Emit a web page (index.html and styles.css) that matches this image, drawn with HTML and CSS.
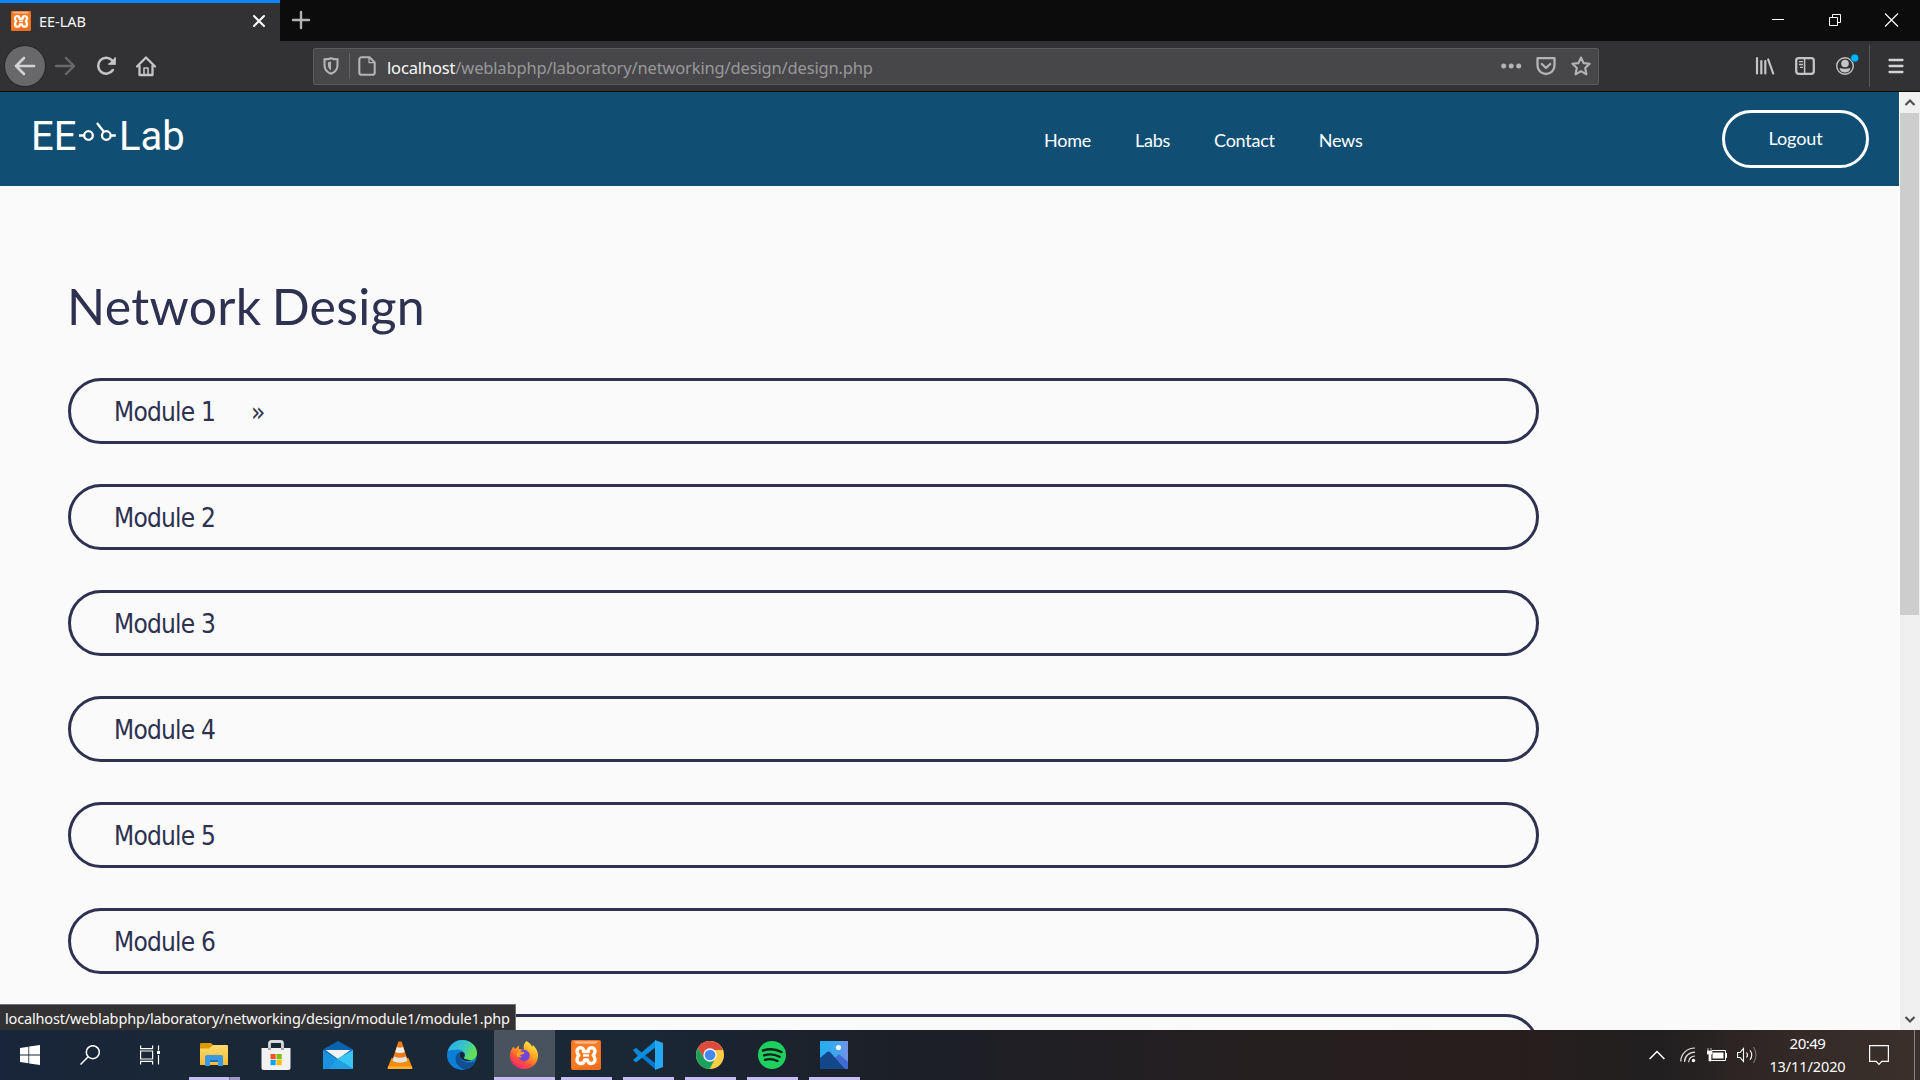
FILE: index.html
```html
<!DOCTYPE html>
<html lang="en">
<head>
<meta charset="utf-8">
<title>EE-LAB</title>
<link rel="stylesheet" href="styles.css">
</head>
<body>
<div class="screen">
  <div class="tabstrip">
    <div class="tab">
      <svg class="favicon" width="20" height="20" viewBox="0 0 30 30"><use href="#xampp"/></svg>
      <span class="tab-title">EE-LAB</span>
      <svg width="14" height="14" viewBox="0 0 14 14" fill="none" stroke="#fff" stroke-width="2" stroke-linecap="round"><path d="M2 2l10 10M12 2L2 12"/></svg>
    </div>
    <svg class="newtab" width="20" height="20" viewBox="0 0 20 20" fill="none" stroke="#b4b4b5" stroke-width="2.4" stroke-linecap="round"><path d="M10 2v16M2 10h16"/></svg>
    <div class="window-controls">
      <svg width="57" height="40" viewBox="0 0 57 40" stroke="#fff"><path d="M23 19.500h12"/></svg>
      <svg width="57" height="40" viewBox="0 0 57 40" fill="none" stroke="#fff"><path d="M23.500 17.500h8v8h-8zM26.500 17.500v-3h8v8h-3"/></svg>
      <svg width="57" height="40" viewBox="0 0 57 40" fill="none" stroke="#fff" stroke-width="1.100"><path d="M22 13.500l13 13M35 13.500l-13 13"/></svg>
    </div>
  </div>

  <div class="toolbar">
    <div class="nav-buttons">
      <span class="back"><svg width="22" height="20" viewBox="0 0 22 20" fill="none" stroke="#d2d2d3" stroke-width="2.600" stroke-linecap="round" stroke-linejoin="round"><path d="M20 10H2M10 2L2 10l8 8"/></svg></span>
      <span><svg width="22" height="20" viewBox="0 0 22 20" fill="none" stroke="#68686a" stroke-width="2.400" stroke-linecap="round" stroke-linejoin="round"><path d="M2 10h18M12 2l8 8-8 8"/></svg></span>
      <span><svg width="22" height="22" viewBox="0 0 22 22" fill="none" stroke="#c4c4c5" stroke-width="2.500" stroke-linecap="round"><path d="M17.300 5.500A8 8 0 1 0 17.900 15"/><path d="M20.500 2v7.500H13z" fill="#c4c4c5" stroke="none"/><path d="M20 3v6h-6" stroke-width="1.500"/></svg></span>
      <span><svg width="22" height="22" viewBox="0 0 22 22" fill="none" stroke="#c4c4c5" stroke-width="2.300" stroke-linecap="round" stroke-linejoin="round"><path d="M2 11.500L11 2.500l9 9M4.500 11v9h13v-9"/><path d="M9 20v-7h4v7" stroke-width="1.600"/></svg></span>
    </div>
    <div class="urlbar">
      <svg class="shield" width="16" height="18" viewBox="0 0 16 18"><path d="M8 1.200c2 .9 4 1.100 6.500 1.100V8c0 4-2.500 7.200-6.500 8.700C4 15.200 1.500 12 1.500 8V2.300C4 2.300 6 2.100 8 1.200z" fill="none" stroke="#b4b4b5" stroke-width="2.100"/><path d="M8 4.600v9C6 12 4.900 10 4.900 8V5.300z" fill="#b4b4b5"/></svg>
      <span class="url-rule"></span>
      <svg width="18" height="20" viewBox="0 0 18 20" fill="none" stroke="#b4b4b5" stroke-width="2.100" stroke-linejoin="round"><path d="M11.500 1.200H3.600a2.300 2.300 0 0 0-2.300 2.300v13a2.300 2.300 0 0 0 2.300 2.300h10.800a2.300 2.300 0 0 0 2.300-2.300V6.400z"/><path d="M11 1.500v5.200h5.500" stroke-width="1.300"/></svg>
      <span class="url"><b>localhost</b>/weblabphp/laboratory/networking/design/design.php</span>
      <svg width="22" height="20" viewBox="0 0 22 20" fill="#b4b4b5"><circle cx="2.700" cy="10" r="2.500"/><circle cx="10.200" cy="10" r="2.500"/><circle cx="17.700" cy="10" r="2.500"/></svg>
      <svg class="pocket" width="20" height="20" viewBox="0 0 20 20" fill="none" stroke="#b4b4b5" stroke-width="2.300" stroke-linecap="round" stroke-linejoin="round"><path d="M1.500 2.200h17v7.300a8.500 8.500 0 0 1-17 0z"/><path d="M5.800 8l4.200 4 4.200-4"/></svg>
      <svg width="20" height="20" viewBox="0 0 20 20" fill="none" stroke="#b4b4b5" stroke-width="2.100" stroke-linejoin="round"><path d="M10 1.500l2.600 5.600 6 .7-4.400 4.200 1.200 6.300L10 15.200l-5.400 3.100L5.800 12 1.400 7.800l6-.7z"/></svg>
    </div>
    <div class="tools">
      <svg width="20" height="20" viewBox="0 0 20 20" fill="none" stroke="#c4c4c5" stroke-width="2.200" stroke-linecap="round"><path d="M2 2v15.500M6.300 5v12.500M10.300 5v12.500M13.200 3.500l5 14"/></svg>
      <svg width="20" height="20" viewBox="0 0 20 20" fill="none" stroke="#c4c4c5"><rect x="1.200" y="2.200" width="17.600" height="15.600" rx="2.500" stroke-width="2.300"/><path d="M9.600 2v16" stroke-width="1.500"/><path d="M4 5.600h4M4 8.500h4M5 11.400h3" stroke-width="1.300"/></svg>
      <svg width="26" height="26" viewBox="0 0 26 26"><circle cx="12" cy="14" r="8.300" fill="none" stroke="#c4c4c5" stroke-width="1.400"/><circle cx="12" cy="11.500" r="3.800" fill="#c4c4c5"/><path d="M6.500 16c2.500 1 8.500 1 11 0-.5 3-2.500 4.500-5.500 4.500S7 19 6.500 16z" fill="#c4c4c5"/><circle cx="21.700" cy="6" r="4.300" fill="#075d86"/><circle cx="21.700" cy="6" r="3.500" fill="#00b3f4"/></svg>
      <span class="tools-rule"></span>
      <svg width="18" height="18" viewBox="0 0 18 18" stroke="#d2d2d3" stroke-width="2.300" stroke-linecap="round"><path d="M2.500 3h13M2.500 9h13M2.500 15h13"/></svg>
    </div>
  </div>

  <div class="viewport">
    <div class="page">
      <header class="site-header">
        <div class="logo"><span>EE</span><svg width="38" height="22" viewBox="0 0 38 22" fill="none" stroke="#fff" stroke-width="2.300"><circle cx="10.500" cy="13.500" r="4.300"/><circle cx="28.300" cy="13.500" r="4.300"/><path d="M1 13.500h5M32.800 13.500h5M19 1l7 9"/></svg><span>Lab</span></div>
        <nav class="menu"><a>Home</a><a>Labs</a><a>Contact</a><a>News</a></nav>
        <a class="logout">Logout</a>
      </header>
      <main class="content">
        <h1>Network Design</h1>
        <div class="modules">
          <a class="module">Module 1<span class="raquo">»</span></a>
          <a class="module">Module 2</a>
          <a class="module">Module 3</a>
          <a class="module">Module 4</a>
          <a class="module">Module 5</a>
          <a class="module">Module 6</a>
          <a class="module"></a>
        </div>
      </main>
    </div>
    <div class="scrollbar">
      <svg width="20" height="21" viewBox="0 0 20 21" fill="none" stroke="#505050" stroke-width="2.200"><path d="M5.500 13L10 8.500l4.500 4.500"/></svg>
      <span class="thumb"></span>
      <svg width="20" height="21" viewBox="0 0 20 21" fill="none" stroke="#505050" stroke-width="2.200"><path d="M5.500 8l4.500 4.500L14.500 8"/></svg>
    </div>
    <div class="status">localhost/weblabphp/laboratory/networking/design/module1/module1.php</div>
  </div>

  <div class="taskbar">
    <div class="system">
      <svg width="20" height="20" viewBox="0 0 20 20" fill="#fff"><path d="M0 3l8.400-1.200v7.700H0zM9.200 1.600L20 0v9.500H9.200zM0 10.500h8.400v7.700L0 17zM9.200 10.500H20V20L9.200 18.400z"/></svg>
      <svg width="20" height="20" viewBox="0 0 20 20" fill="none" stroke="#fff" stroke-width="1.500"><circle cx="12.800" cy="7.200" r="6.500"/><path d="M8.200 11.800L.5 19.500"/></svg>
      <svg width="20" height="20" viewBox="0 0 20 20" fill="none" stroke="#fff" stroke-width="1.200"><path d="M.6.500v3.200h12V.5M.6 19.500v-3.200h12v3.200M.6 6h12v8H.6zM18.500.5v5M18.500 10v9.500"/><path d="M17 6h3v3h-3z" fill="#fff" stroke="none"/></svg>
    </div>
    <div class="apps">
      <span class="app open stacked"><svg width="30" height="30" viewBox="0 0 30 30"><defs><linearGradient id="fold" x2="0" y2="1"><stop stop-color="#ffda6d"/><stop offset="1" stop-color="#f5bb31"/></linearGradient></defs><path d="M1 5V4q0-1 1-1h10l2 2v6H1z" fill="#dc9900"/><path d="M1 8.500h9l4-3.500h14q1 0 1 1v19H1z" fill="url(#fold)"/><path d="M6 17q0-2 2-2h14q2 0 2 2v9h-5v-6h-8v6H6z" fill="#3998e4"/><path d="M11 20h8v2h-8z" fill="#1e70bd"/></svg></span>
      <span class="app"><svg width="30" height="30" viewBox="0 0 30 30"><path d="M8.500 11V3.500Q8.500 1.500 10.500 1.500h9q2 0 2 2V11" fill="none" stroke="#d8d8d8" stroke-width="2.800"/><path d="M.5 8h29v20q0 2-2 2h-25q-2 0-2-2z" fill="#f2f2f2"/><path d="M7 8h3v2H7zM20 8h3v2h-3z" fill="#aaa"/><path d="M9.500 14h5.200v5.200H9.500z" fill="#f35325"/><path d="M15.500 14h5.200v5.200h-5.200z" fill="#81bc06"/><path d="M9.500 20h5.200v5.200H9.500z" fill="#05a6f0"/><path d="M15.500 20h5.200v5.200h-5.200z" fill="#ffba08"/></svg></span>
      <span class="app"><svg width="30" height="30" viewBox="0 0 30 30"><path d="M0 9.500L15 1l15 8.500V20H0z" fill="#0a63ad"/><path d="M2.500 10h25L15 19z" fill="#f3f3f3"/><path d="M0 10l30 19H0z" fill="#1a92dd"/><path d="M30 10v19L14 19z" fill="#37c4f3"/><path d="M14 19l16 10H6z" fill="#1fa0e5"/></svg></span>
      <span class="app"><svg width="30" height="30" viewBox="0 0 30 30"><path d="M6.500 18h17l4 10q0 1-1 1h-23q-1 0-1-1z" fill="#f78b0d"/><path d="M3 26.500h24v2.500H3z" fill="#ffb132"/><path d="M13.200 2q1.800-1.500 3.600 0L23 21q-8 4-16 0z" fill="#f07d14"/><path d="M11.900 7q3 1.400 6.200 0l1.700 5q-5 2-9.600 0z" fill="#eee"/><path d="M9 16.500q6 2.500 12 0l1.500 4.500q-8 3.500-15 0z" fill="#e4e4e4"/></svg></span>
      <span class="app"><svg width="30" height="30" viewBox="0 0 30 30"><defs><linearGradient id="edge" x2="1" y2=".5"><stop stop-color="#28a8e8"/><stop offset=".55" stop-color="#37c6c8"/><stop offset="1" stop-color="#66e04e"/></linearGradient></defs><circle cx="15" cy="15" r="15" fill="#0c7fd6"/><path d="M1 11C3 4 9 0 15 0c9 0 15 6 15 13 0 5-4 7.500-8 7.500-4 0-6-1.500-5-3 3-4-1-8-6-8-4 0-8 1-10 1.500z" fill="url(#edge)"/><path d="M13 12c-7 3-6 14 5 17.500 5-1 9-5 10.500-8.500-6 3.500-14 1-15.500-3.500-.5-2-.5-4 0-5.500z" fill="#124e91"/><path d="M17 17.500c2-3 0-6-3.500-5.500-1 2-1 5 1 7 2 2 7 3 10 1-5 0-8-1-7.500-2.500zM30 15c0 2-.6 4.500-1.800 6.800L31 23z" fill="#1a2735"/></svg></span>
      <span class="app open active"><svg width="30" height="30" viewBox="0 0 30 30"><defs><linearGradient id="fox" x1=".8" x2=".2" y2="1"><stop stop-color="#fff04a"/><stop offset=".4" stop-color="#ffa321"/><stop offset=".7" stop-color="#ff503a"/><stop offset="1" stop-color="#f81c83"/></linearGradient></defs><path d="M17.500 1c4 2.500 5 4 5.500 6l1-2c3 3 5.500 7 5 12-1 8-7 12-14 12S1 23.500 1 16c0-4 1.500-7 3.500-9.500L6 9l4-3.500V9l5 1C14 6 15 3 17.500 1z" fill="url(#fox)"/><circle cx="15" cy="15.500" r="5.800" fill="#7443d9"/><path d="M8.500 10.500l5.500 1.500c2 0 2 2-1 2.500-3 .5-2 2 .5 2.500-3 1-6 0-6-2z" fill="#ff9b25"/></svg></span>
      <span class="app open"><svg width="30" height="30" viewBox="0 0 30 30"><g id="xampp"><rect width="30" height="30" rx="2" fill="#ed7020"/><path d="M1 1h28v22L1 29z" fill="#f97a22"/><path d="M3 1.200h24q-1 2.500-3 2.500H6q-2 0-3-2.500z" fill="#f9b48b"/><path d="M12.500 11.500C13.500 6.500 6 6.500 6 11c0 2.500.5 3.200 1.800 4.300C6.500 16.500 6 17.500 6 19.700c0 5 7.500 5 7.500.3h3c0 4.700 7.500 4.700 7.500-.3 0-2.200-.5-3.200-1.800-4.400C23.500 14.200 24 13.500 24 11c0-4.500-7.500-4.500-6.500.5z" fill="none" stroke="#fff" stroke-width="3.400" stroke-linejoin="round"/><path d="M12 15.500h6" stroke="#fff" stroke-width="2.400"/></g></svg></span>
      <span class="app open"><svg width="30" height="30" viewBox="0 0 30 30"><path d="M0 10l3-2 19 15v6z" fill="#0179cb"/><path d="M0 20l3 2.500L23 7V0z" fill="#0690df"/><path d="M0 10l3-2 6 5-4 3.500z" fill="#0d86d4"/><path d="M22 0l8 3v24l-8 3z" fill="#25a9f2"/></svg></span>
      <span class="app open"><svg width="30" height="30" viewBox="0 0 30 30"><circle cx="15" cy="15" r="14" fill="#ffce43"/><path d="M2.900 8A14 14 0 0 1 28 10H15l-6 8z" fill="#dd4b40"/><path d="M2.900 8A14 14 0 0 0 14.500 29L20 19l-11-1z" fill="#1aa15f"/><circle cx="15" cy="15" r="6.700" fill="#f4f4f4"/><circle cx="15" cy="15" r="5.300" fill="#4587f3"/></svg></span>
      <span class="app open"><svg width="30" height="30" viewBox="0 0 30 30"><circle cx="15" cy="15" r="14" fill="#1ed15f"/><path d="M6 10.500c6-2 13-1.500 18.500 1.500M7 15.300c5-1.500 11-1 15.500 1.500M8 19.800c4-1.200 8.500-.8 12.500 1.200" fill="none" stroke="#132019" stroke-width="2.400" stroke-linecap="round"/></svg></span>
      <span class="app open"><svg width="30" height="30" viewBox="0 0 30 30"><defs><linearGradient id="pic" x2="1"><stop stop-color="#22aef2"/><stop offset=".65" stop-color="#46a5ee"/><stop offset="1" stop-color="#788fe5"/></linearGradient></defs><path d="M1 1h28v28H1z" fill="url(#pic)"/><path d="M13 20l6-5q1-.8 2 0l8 7v7H13z" fill="#426bd2"/><path d="M1 18l7-6q1.500-1 3 0l15 17H1z" fill="#14468a"/><circle cx="19.500" cy="7.500" r="2.600" fill="#f2f4fb"/></svg></span>
    </div>
    <div class="tray">
      <svg width="16" height="10" viewBox="0 0 16 10" fill="none" stroke="#fff" stroke-width="1.500"><path d="M.6 9L8 1.500 15.400 9"/></svg>
      <svg class="wifi" width="16" height="16" viewBox="0 0 16 16" fill="none" stroke="#e4e2e1" stroke-width="1.200"><path d="M.8 14.500C.8 7 7 1 15 1M4.500 15C4.500 9.500 9 5.200 15 5.200M8.600 15.200c0-3.500 2.800-6.200 6.400-6.200"/><circle cx="13.500" cy="13.500" r="1.700" fill="#fff" stroke="none"/></svg>
      <svg class="battery" width="20" height="14" viewBox="0 0 20 14" fill="none" stroke="#fff"><path d="M5 2.500h13.500v10h-15V8"/><path d="M5.500 4.500h11v6h-11zM18.500 5h1.500v5h-1.500z" fill="#fff" stroke="none"/><path d="M1 0v3M4 0v3M0 3h5v3H0zM2 6h2v7H2z" fill="#fff" stroke-width=".7"/></svg>
      <svg class="volume" width="20" height="18" viewBox="0 0 20 18" fill="none" stroke="#fff" stroke-width="1.100"><path d="M.6 6.500h2.500l3.400-4v13l-3.400-4H.6zM9.500 6.500q2 2.500 0 5M13 4.200q3.500 4.800 0 9.600"/><path d="M16.500 1q5 8 0 16" stroke="#777"/></svg>
      <div class="clock"><span class="time">20:49</span><span class="date">13/11/2020</span></div>
      <svg class="notice" width="20" height="21" viewBox="0 0 20 21" fill="none" stroke="#fff" stroke-width="1.200"><path d="M.6.600h18.800v15.800h-6.600l-2.800 3-2.800-3H.6z"/></svg>
      <span class="peek"></span>
    </div>
  </div>
</div>
</body>
</html>
```
FILE: styles.css
```css
* { box-sizing: border-box; }
body { margin: 0; font-family: "Noto Sans", sans-serif; }
svg { display: block; flex: none; }

.screen { width: 1920px; height: 1080px; display: flex; flex-direction: column; overflow: hidden; }

/* Browser chrome */
.tabstrip { height: 41px; background: #0c0c0d; display: flex; align-items: flex-start; }
.tab { width: 280px; height: 41px; background: #323234; border-top: 3px solid #0a84ff; display: flex; align-items: center; padding: 0 14px 2px 11px; }
.tab-title { flex: 1; margin-left: 8px; font-size: 14.5px; line-height: 18px; letter-spacing: -0.05px; color: #f9f9fa; }
.newtab { margin: 10px 0 0 11px; }
.window-controls { display: flex; margin-left: auto; }

.toolbar { height: 51px; background: #323234; border-bottom: 1px solid #0c0c0d; display: flex; align-items: center; }
.nav-buttons { display: flex; width: 313px; padding-left: 5px; }
.nav-buttons span { width: 40.400px; height: 40px; display: flex; align-items: center; justify-content: center; }
.nav-buttons .back { width: 40px; background: #68686a; border-radius: 50%; box-shadow: 0 0 0 1px #262628; }
.urlbar { width: 1286px; height: 37px; background: #474749; border: 1px solid #5c5c5e; border-radius: 2px; display: flex; align-items: center; padding: 0 7px 0 9px; }
.url-rule { width: 1px; height: 26px; margin: 0 8px 0 10px; background: #646466; }
.url { flex: 1; margin-left: 11px; padding-top: 2px; font-size: 16.500px; letter-spacing: -0.155px; color: #98989a; white-space: nowrap; }
.url b { font-weight: 400; color: #f9f9fa; }
.pocket { margin: 0 15px 0 13px; }
.tools { display: flex; align-items: center; padding-left: 156px; }
.tools svg:nth-child(2) { margin: 0 18px 0 20px; }
.tools svg:nth-child(3) { margin-top: -3px; }
.tools-rule { width: 1px; height: 42px; background: #58585a; margin: 0 17px 0 10px; }

/* Page */
.viewport { position: relative; height: 938px; display: flex; background: #fafafa; overflow: hidden; }
.page { width: 1899px; color: #2e3150; }
.site-header { height: 94px; background: #104e74; color: #fff; display: flex; }
.logo { width: 1044px; padding: 21px 0 0 31px; display: flex; align-items: flex-start; font: 40px/47px Roboto, sans-serif; }
.logo svg { margin: 9px 2.500px 0 2px; }
.menu { width: 678px; display: flex; gap: 44px; padding-top: 34px; font: 18px/28px Lato, sans-serif; letter-spacing: -0.250px; }
.logout { width: 147px; height: 58px; margin-top: 18px; border: 3px solid #fff; border-radius: 29px; font: 18px/50px Lato, sans-serif; letter-spacing: -0.100px; text-align: center; }
.content { padding: 83px 0 0 67px; }
h1 { margin: 0 0 35px; font: 400 50px/74px Lato, sans-serif; letter-spacing: 0.300px; word-spacing: -3px; }
.modules { display: flex; flex-direction: column; gap: 40px; width: 1471px; margin-left: 1px; }
.module { height: 66px; flex: none; padding-left: 43px; border: 3px solid #2e3150; border-radius: 33px; font: 26px/62px "DejaVu Sans Condensed", "DejaVu Sans", sans-serif; font-stretch: condensed; letter-spacing: -0.8px; display: flex; }
.raquo { margin-left: 36px; }
.scrollbar { width: 21px; height: 938px; background: #f0f0f0; border-left: 1px solid #fff; display: flex; flex-direction: column; }
.scrollbar svg:last-child { margin-top: auto; }
.thumb { width: 19px; height: 502px; background: #cdcdcd; }
.status { position: absolute; left: 0; bottom: 0; width: 516px; height: 26px; padding-left: 5px; background: #323234; border-top: 1px solid #737375; border-right: 1px solid #737375; color: #f9f9fa; font-size: 14.500px; letter-spacing: -0.160px; line-height: 27px; white-space: nowrap; }

/* Taskbar */
.taskbar { height: 50px; display: flex; background: linear-gradient(90deg, #19253a 0, #1a2736 180px, #1a2735 650px, #1c1f27 900px, #251f20 1250px, #271e1d 1500px, #211f20 1660px, #342a27 1800px, #3b302b 1920px); }
.system { width: 184px; display: flex; align-items: center; gap: 40px; padding-left: 20px; }
.apps { display: flex; }
.app { width: 62px; height: 50px; display: flex; align-items: center; justify-content: center; border: solid transparent; border-width: 0 6px 0 5px; }
.app svg { margin-right: 1px; }
.open { background: linear-gradient(#c5bdf3, #c5bdf3) bottom / 100% 3px no-repeat padding-box; }
.stacked { background-image: linear-gradient(90deg, #c5bdf3 40px, #77739a 40px 41px, #9d98c3 41px); }
.active { width: 61px; border: 0; margin-right: 1px; background-color: #48535f; }
.tray { flex: 1; display: flex; align-items: center; padding-left: 783px; color: #fff; }
.wifi { margin-left: 15px; }
.battery { margin-left: 11px; }
.volume { margin-left: 10px; }
.clock { width: 101px; margin-right: 11px; display: flex; flex-direction: column; align-items: center; font-size: 14.500px; line-height: 23px; }
.time { font-size: 15px; letter-spacing: -0.500px; }
.date { letter-spacing: -0.100px; }
.peek { width: 1px; height: 50px; margin-left: 25px; background: #8a8481; }
```
